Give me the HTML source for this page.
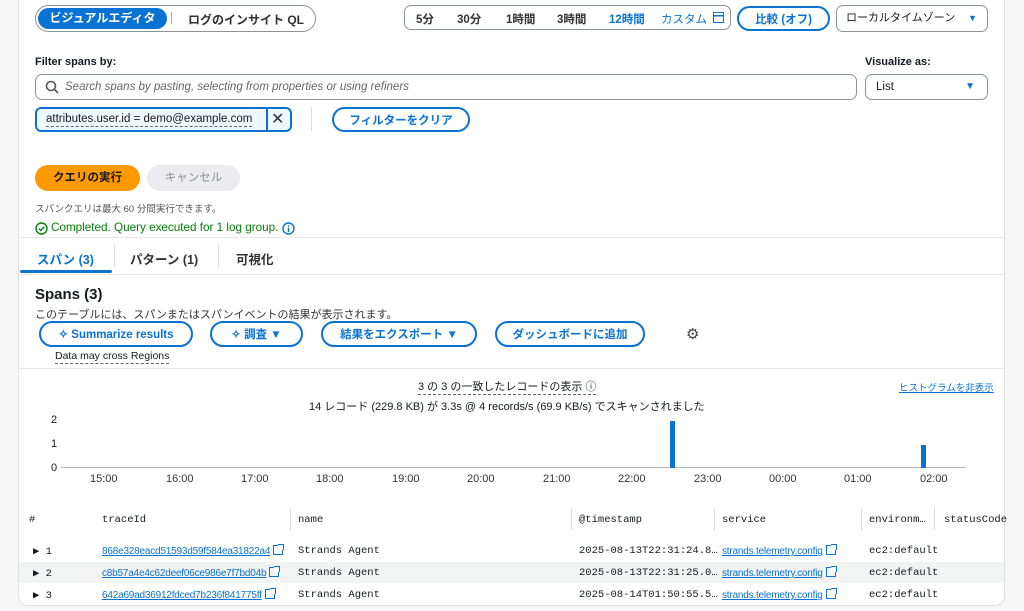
<!DOCTYPE html>
<html><head><meta charset="utf-8"><style>
*{box-sizing:border-box;margin:0;padding:0}
body{width:1024px;height:611px;overflow:hidden;background:#f6f6f7;font-family:"Liberation Sans","Noto Sans CJK JP",sans-serif;color:#16191f;font-size:12px;position:relative}
.a{position:absolute}
.card{position:absolute;left:18px;top:-2px;width:987px;height:608px;background:#fff;border:1px solid #e0e0e0;border-radius:0 0 10px 10px}
.pill{position:absolute;border:2px solid #0972d3;border-radius:16px;color:#0972d3;font-weight:bold;display:flex;align-items:center;justify-content:center;font-size:11.5px;background:#fff}
.hr{position:absolute;left:19px;width:985px;height:1px;background:#e6e6e6}
.mono{font-family:"Liberation Mono","DejaVu Sans Mono",monospace;font-size:10.5px}
.lnk{color:#0972d3;text-decoration:underline}
.tick{position:absolute;top:473px;font-size:11px;color:#333}
.ext{display:inline-block;width:10px;height:10px;border:1.5px solid #0972d3;vertical-align:-1px;margin-left:3px;position:relative}
.ext:after{content:"";position:absolute;right:-2px;top:-2px;width:5px;height:5px;background:#fff;border-top:1.5px solid #0972d3;border-right:1.5px solid #0972d3}
</style></head><body>
<div class="card"></div>
<div class="a" style="left:35px;top:5px;width:281px;height:27px;border:1.5px solid #8d9199;border-radius:14px"></div>
<div class="a" style="left:38px;top:8px;width:129px;height:21px;background:#0972d3;border-radius:11px;color:#fff;font-weight:bold;font-size:12px;text-align:center;line-height:21px">ビジュアルエディタ</div>
<div class="a" style="left:171px;top:12px;width:1px;height:12px;background:#aaa"></div>
<div class="a" style="left:188px;top:11px;font-weight:bold;font-size:12px;color:#333">ログのインサイト QL</div>
<div class="a" style="left:404px;top:5px;width:327px;height:25px;border:1.5px solid #8d9199;border-radius:7px"></div>
<div class="a" style="left:416px;top:11px;font-weight:bold;font-size:11.5px;color:#333">5分</div>
<div class="a" style="left:457px;top:11px;font-weight:bold;font-size:11.5px;color:#333">30分</div>
<div class="a" style="left:506px;top:11px;font-weight:bold;font-size:11.5px;color:#333">1時間</div>
<div class="a" style="left:557px;top:11px;font-weight:bold;font-size:11.5px;color:#333">3時間</div>
<div class="a" style="left:609px;top:11px;font-weight:bold;font-size:11.5px;color:#0972d3">12時間</div>
<div class="a" style="left:661px;top:11px;font-size:11.5px;color:#0972d3">カスタム</div>
<div class="a" style="left:713px;top:12px;width:11px;height:11px;border:1.5px solid #0972d3;background:linear-gradient(#0972d3,#0972d3) 0 2px/100% 1.5px no-repeat"></div>
<div class="pill" style="left:737px;top:6px;width:93px;height:25px">比較 (オフ)</div>
<div class="a" style="left:836px;top:5px;width:152px;height:27px;border:1.5px solid #8d9199;border-radius:7px;padding-left:9px;line-height:24px;font-size:11px;white-space:nowrap">ローカルタイムゾーン<span style="position:absolute;right:10px;color:#0972d3;font-size:9px">▼</span></div>
<div class="a" style="left:35px;top:56px;font-weight:bold;font-size:11px">Filter spans by:</div>
<div class="a" style="left:35px;top:74px;width:822px;height:26px;border:1.5px solid #8d9199;border-radius:7px"></div>
<svg class="a" style="left:45px;top:80px" width="14" height="14"><circle cx="6" cy="6" r="4.5" fill="none" stroke="#555" stroke-width="1.6"/><path d="M9.5 9.5L13 13" stroke="#555" stroke-width="1.6"/></svg>
<div class="a" style="left:65px;top:81px;font-style:italic;color:#666;font-size:11.5px">Search spans by pasting, selecting from properties or using refiners</div>
<div class="a" style="left:865px;top:56px;font-weight:bold;font-size:11px">Visualize as:</div>
<div class="a" style="left:865px;top:74px;width:123px;height:26px;border:1.5px solid #8d9199;border-radius:7px;padding-left:10px;line-height:24px;font-size:11.5px">List<span style="position:absolute;right:12px;color:#0972d3;font-size:10px">▼</span></div>
<div class="a" style="left:35px;top:107px;width:257px;height:25px;border:2px solid #0972d3;border-radius:6px;background:#f0f8ff"></div>
<div class="a" style="left:266px;top:107px;width:2px;height:25px;background:#0972d3"></div>
<div class="a" style="left:46px;top:113px;font-size:11.5px;border-bottom:1px dashed #666;line-height:13px">attributes.user.id = demo@example.com</div>
<div class="a" style="left:271px;top:109px;font-size:16px;color:#333">✕</div>
<div class="a" style="left:311px;top:107px;width:1px;height:24px;background:#ddd"></div>
<div class="pill" style="left:332px;top:107px;width:138px;height:25px">フィルターをクリア</div>
<div class="a" style="left:35px;top:165px;width:105px;height:26px;background:#ff9900;border-radius:13px;font-weight:bold;text-align:center;line-height:26px;font-size:11.5px">クエリの実行</div>
<div class="a" style="left:147px;top:165px;width:93px;height:26px;background:#ebebf0;border-radius:13px;color:#8d9199;text-align:center;line-height:26px;font-size:11.5px">キャンセル</div>
<div class="a" style="left:35px;top:201px;font-size:9.5px;color:#555">スパンクエリは最大 60 分間実行できます。</div>
<svg class="a" style="left:35px;top:222px" width="13" height="13"><circle cx="6.5" cy="6.5" r="5.5" fill="none" stroke="#037f0c" stroke-width="1.4"/><path d="M3.8 6.6L5.8 8.5L9.3 4.6" fill="none" stroke="#037f0c" stroke-width="1.4"/></svg>
<div class="a" style="left:51px;top:221px;font-size:11.7px;color:#037f0c">Completed. Query executed for 1 log group.</div>
<svg class="a" style="left:282px;top:222px" width="13" height="13"><circle cx="6.5" cy="6.5" r="5.5" fill="none" stroke="#0972d3" stroke-width="1.4"/><path d="M6.5 5.5V10M6.5 3.2V4.5" stroke="#0972d3" stroke-width="1.5"/></svg>
<div class="hr" style="top:237px"></div>
<div class="a" style="left:37px;top:249px;font-weight:bold;color:#0972d3;font-size:12.5px">スパン (3)</div>
<div class="a" style="left:20px;top:270px;width:92px;height:3px;background:#0972d3;border-radius:2px"></div>
<div class="a" style="left:114px;top:245px;width:1px;height:22px;background:#ddd"></div>
<div class="a" style="left:130px;top:249px;font-weight:bold;color:#333;font-size:12.5px">パターン (1)</div>
<div class="a" style="left:218px;top:245px;width:1px;height:22px;background:#ddd"></div>
<div class="a" style="left:236px;top:249px;font-weight:bold;color:#333;font-size:12.5px">可視化</div>
<div class="hr" style="top:274px"></div>
<div class="a" style="left:35px;top:286px;font-weight:bold;font-size:15px">Spans (3)</div>
<div class="a" style="left:35px;top:306px;font-size:11px;color:#333">このテーブルには、スパンまたはスパンイベントの結果が表示されます。</div>
<div class="pill" style="left:39px;top:321px;width:154px;height:26px">✧ Summarize results</div>
<div class="pill" style="left:210px;top:321px;width:93px;height:26px">✧ 調査 ▼</div>
<div class="pill" style="left:321px;top:321px;width:156px;height:26px">結果をエクスポート ▼</div>
<div class="pill" style="left:495px;top:321px;width:150px;height:26px">ダッシュボードに追加</div>
<div class="a" style="left:686px;top:325px;font-size:15px;color:#444">⚙</div>
<div class="a" style="left:55px;top:350px;font-size:10.5px;border-bottom:1px dashed #666;line-height:13px">Data may cross Regions</div>
<div class="hr" style="top:368px"></div>
<div class="a" style="left:418px;top:380px;font-size:11px;border-bottom:1px dashed #666;line-height:14px">3 の 3 の一致したレコードの表示 ⓘ</div>
<div class="a" style="left:899px;top:380px;font-size:9.5px"><span class="lnk">ヒストグラムを非表示</span></div>
<div class="a" style="left:309px;top:398px;font-size:11px">14 レコード (229.8 KB) が 3.3s @ 4 records/s (69.9 KB/s) でスキャンされました</div>
<div class="a" style="left:51px;top:414px;font-size:11px">2</div>
<div class="a" style="left:51px;top:438px;font-size:11px">1</div>
<div class="a" style="left:51px;top:462px;font-size:11px">0</div>
<div class="a" style="left:61px;top:467px;width:905px;height:1px;background:#bbb"></div>
<div class="a" style="left:670px;top:421px;width:5px;height:47px;background:#0972d3"></div>
<div class="a" style="left:921px;top:445px;width:5px;height:23px;background:#0972d3"></div>
<div class="tick" style="left:90px">15:00</div><div class="tick" style="left:166px">16:00</div><div class="tick" style="left:241px">17:00</div><div class="tick" style="left:316px">18:00</div><div class="tick" style="left:392px">19:00</div><div class="tick" style="left:467px">20:00</div><div class="tick" style="left:543px">21:00</div><div class="tick" style="left:618px">22:00</div><div class="tick" style="left:694px">23:00</div><div class="tick" style="left:769px">00:00</div><div class="tick" style="left:844px">01:00</div><div class="tick" style="left:920px">02:00</div>
<div class="a mono" style="left:29px;top:514px">#</div>
<div class="a mono" style="left:102px;top:514px">traceId</div>
<div class="a" style="left:290px;top:508px;width:1px;height:22px;background:#ddd"></div>
<div class="a mono" style="left:298px;top:514px">name</div>
<div class="a" style="left:571px;top:508px;width:1px;height:22px;background:#ddd"></div>
<div class="a mono" style="left:579px;top:514px">@timestamp</div>
<div class="a" style="left:714px;top:508px;width:1px;height:22px;background:#ddd"></div>
<div class="a mono" style="left:722px;top:514px">service</div>
<div class="a" style="left:861px;top:508px;width:1px;height:22px;background:#ddd"></div>
<div class="a mono" style="left:869px;top:514px">environm…</div>
<div class="a" style="left:934px;top:508px;width:1px;height:22px;background:#ddd"></div>
<div class="a mono" style="left:944px;top:514px">statusCode</div>
<div class="a" style="left:19px;top:562px;width:985px;height:21px;background:#f2f3f3"></div>
<div class="a mono" style="left:33px;top:545px">▶ 1</div>
<div class="a mono" style="left:33px;top:567px">▶ 2</div>
<div class="a mono" style="left:33px;top:589px">▶ 3</div>
<div class="a" style="left:102px;top:545px;font-size:10px;letter-spacing:-0.2px"><span class="lnk">868e328eacd51593d59f584ea31822a4</span><span class="ext"></span></div>
<div class="a" style="left:102px;top:567px;font-size:10px;letter-spacing:-0.2px"><span class="lnk">c8b57a4e4c62deef06ce986e7f7bd04b</span><span class="ext"></span></div>
<div class="a" style="left:102px;top:589px;font-size:10px;letter-spacing:-0.2px"><span class="lnk">642a69ad36912fdced7b236f841775ff</span><span class="ext"></span></div>
<div class="a mono" style="left:298px;top:545px">Strands Agent</div>
<div class="a mono" style="left:298px;top:567px">Strands Agent</div>
<div class="a mono" style="left:298px;top:589px">Strands Agent</div>
<div class="a mono" style="left:579px;top:545px">2025-08-13T22:31:24.8…</div>
<div class="a mono" style="left:579px;top:567px">2025-08-13T22:31:25.0…</div>
<div class="a mono" style="left:579px;top:589px">2025-08-14T01:50:55.5…</div>
<div class="a" style="left:722px;top:545px;font-size:10px;letter-spacing:-0.2px"><span class="lnk">strands.telemetry.config</span><span class="ext"></span></div>
<div class="a" style="left:722px;top:567px;font-size:10px;letter-spacing:-0.2px"><span class="lnk">strands.telemetry.config</span><span class="ext"></span></div>
<div class="a" style="left:722px;top:589px;font-size:10px;letter-spacing:-0.2px"><span class="lnk">strands.telemetry.config</span><span class="ext"></span></div>
<div class="a mono" style="left:869px;top:545px">ec2:default</div>
<div class="a mono" style="left:869px;top:567px">ec2:default</div>
<div class="a mono" style="left:869px;top:589px">ec2:default</div>
</body></html>
